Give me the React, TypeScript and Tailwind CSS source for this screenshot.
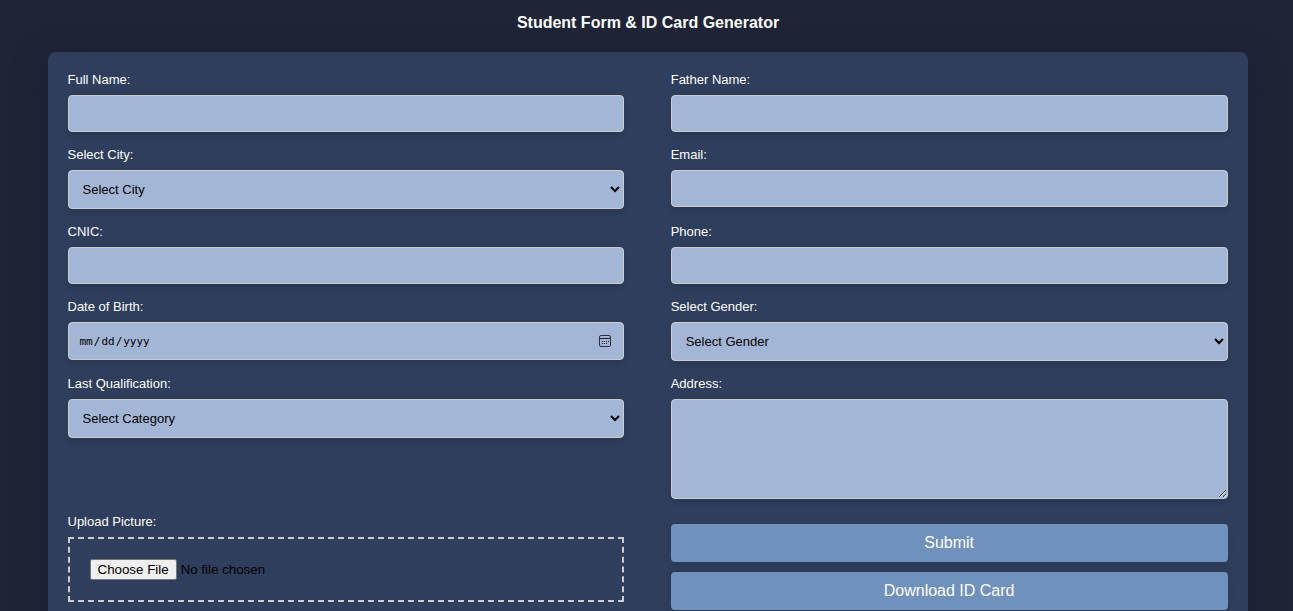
import React from 'react';

const field =
  'block w-full rounded-[4px] border border-[#ccc] bg-[#a4b6d6] text-black shadow-[0_4px_6px_rgba(0,0,0,0.1)] outline-none';

function Field({ label, children }: { label: string; children: React.ReactNode }) {
  return (
    <div className="w-[556.8px]">
      <label className="mb-2 block h-[15px] text-[13px] leading-[15px] font-medium text-white">{label}</label>
      {children}
    </div>
  );
}

function TextInput() {
  return <input type="text" className={`${field} h-[37px] px-2.5 text-[13px]`} />;
}

function Select({ text }: { text: string }) {
  return (
    <select className={`${field} h-[39px] px-2.5 text-[13px]`}>
      <option>{text}</option>
    </select>
  );
}

function DateInput() {
  return (
    <div className="relative">
      <input
        type="date"
        className={`${field} h-[38px] px-2.5 pt-0.5 font-['DejaVu_Sans_Mono',monospace] text-[11px] [&::-webkit-calendar-picker-indicator]:opacity-0`}
      />
      <svg className="pointer-events-none absolute top-[13px] right-[13px]" width="12" height="12" viewBox="0 0 12 12" fill="none">
        <rect x="0.5" y="0.5" width="11" height="11" rx="1.5" stroke="#28303d" />
        <path d="M0.5 3.5H11.5" stroke="#1c222c" />
        <path d="M5 6.5H6M7 6.5H8M9 6.5H10M3 6.5H4M3 8.5H4M5 8.5H6M7 8.5H8" stroke="#1c222c" />
      </svg>
    </div>
  );
}

function Row({ children }: { children: React.ReactNode }) {
  return <div className="mb-[15px] flex items-start justify-between">{children}</div>;
}

export default function App() {
  return (
    <div className="h-[611px] w-full overflow-hidden bg-[#1f2436] font-['Liberation_Sans',Arial,sans-serif]">
      <div className="ml-[47.5px] w-[1200px]">
        <h1 className="h-[52px] pt-[14px] pl-px text-center text-[16px] leading-[18px] font-bold text-white">
          Student Form &amp; ID Card Generator
        </h1>
        <form className="h-[640px] rounded-[8px] bg-[#2e3e5c] p-5 shadow-[0_8px_32px_rgba(26,34,44,0.6)]">
          <Row>
            <Field label="Full Name:"><TextInput /></Field>
            <Field label="Father Name:"><TextInput /></Field>
          </Row>
          <Row>
            <Field label="Select City:"><Select text="Select City" /></Field>
            <Field label="Email:"><TextInput /></Field>
          </Row>
          <Row>
            <Field label="CNIC:"><TextInput /></Field>
            <Field label="Phone:"><TextInput /></Field>
          </Row>
          <Row>
            <Field label="Date of Birth:"><DateInput /></Field>
            <Field label="Select Gender:"><Select text="Select Gender" /></Field>
          </Row>
          <Row>
            <Field label="Last Qualification:"><Select text="Select Category" /></Field>
            <Field label="Address:">
              <textarea className={`${field} h-[100px] resize p-2.5 text-[13px]`} />
            </Field>
          </Row>
          <Row>
            <Field label="Upload Picture:">
              <div className="h-[65px] border-2 border-dashed border-[#ccc] p-5">
                <input
                  type="file"
                  className="block h-[21px] w-full text-[13.333px] text-black file:mr-1 file:h-[21px] file:rounded-[2px] file:border file:border-solid file:border-[#767676] file:bg-[#efefef] file:px-[7px] file:py-0 file:text-black"
                />
              </div>
            </Field>
            <div className="flex w-[556.8px] flex-col gap-2.5 pt-2.5">
              <button type="button" className="h-[38px] rounded-[4px] bg-[#7191bd] text-[16px] leading-[18px] text-white shadow-[0_4px_8px_rgba(0,0,0,0.1)]">
                Submit
              </button>
              <button type="button" className="h-[38px] rounded-[4px] bg-[#7191bd] text-[16px] leading-[18px] text-white shadow-[0_4px_8px_rgba(0,0,0,0.1)]">
                Download ID Card
              </button>
            </div>
          </Row>
        </form>
      </div>
    </div>
  );
}
